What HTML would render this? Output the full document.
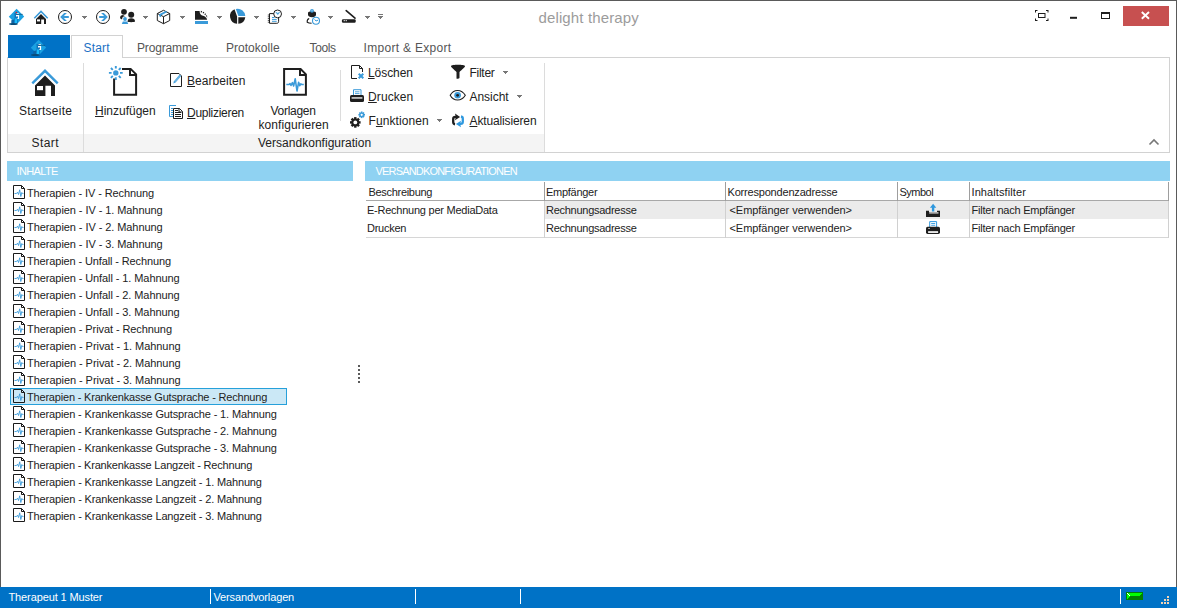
<!DOCTYPE html>
<html><head><meta charset="utf-8">
<style>
*{box-sizing:border-box;margin:0;padding:0}
html,body{width:1177px;height:608px;overflow:hidden;background:#fff}
body{font-family:"Liberation Sans",sans-serif;font-size:11px;color:#222;position:relative}
.abs{position:absolute}
.t{position:absolute;white-space:nowrap;line-height:1}
#win{position:absolute;left:0;top:0;width:1177px;height:587px;border-left:1px solid #5a5a5a;border-top:1px solid #5a5a5a;border-right:1px solid #5a5a5a}
#title{left:538px;top:9px;font-size:15px;color:#9a9a9a;letter-spacing:.15px}
#appbtn{left:8px;top:35px;width:62px;height:23px;background:#0072c6}
#tabline{left:8px;top:57px;width:1161px;height:1px;background:#d2d2d2}
#ribbon{left:7px;top:57px;width:1163px;height:96px;border:1px solid #d2d2d2;background:#fff}
#starttab{left:71px;top:35px;width:52px;height:23px;border:1px solid #d2d2d2;border-bottom:none;background:#fff}
.tab{font-size:12px;color:#555;top:42px}
#capbar{left:8px;top:134px;width:536px;height:18px;background:#f4f4f4}
.rt{font-size:12px;color:#222}
.sep{position:absolute;width:1px;background:#dcdcdc}
.hdr{position:absolute;top:161px;height:20px;background:#8fd2f2}
.hdr span{position:absolute;left:10px;top:4px;color:#fff;font-size:11px;letter-spacing:-.75px;white-space:nowrap}
.ti{position:absolute;left:27px;font-size:11px;letter-spacing:-.19px;white-space:nowrap;line-height:13px;color:#222}
#sel{left:10px;top:388px;width:277px;height:17px;background:#cbe8f6;border:1px solid #26a0da}
#status{left:0;top:587px;width:1177px;height:21px;background:#0072c6}
#status .t{color:#fff;top:5px;font-size:11px}
.ssep{position:absolute;top:2px;width:1px;height:15px;background:#fff}
.vs{top:201px;width:1px;height:37px;background:#d0d0d0}
.vh{top:182px;width:1px;height:19px;background:#9e9e9e}
.di{position:absolute;left:13px}
.gt{position:absolute;font-size:11px;white-space:nowrap;line-height:13px;color:#222}
</style></head><body>
<div id="win"></div>

<!-- quick access toolbar -->
<svg class="abs" style="left:8px;top:8px" width="18" height="18" viewBox="0 0 18 18">
<path d="M8.600 0.800L16.200 8.500L8.600 16.400L0.800 8.700Z" fill="#1ba1e2"/>
<path d="M3.300 12.300L6.900 11.300V15.800H3.300Z" fill="#0c64a6"/>
<path d="M6.400 5L9.600 4.400L10.300 9L9.900 15H5.800L6.600 9Z" fill="#0f76be"/>
<path d="M6.900 10.600H9.300L9.100 15H6.700Z" fill="#19bcfb"/>
<path d="M8.600 5H10.800V5.900H8.600ZM8 7.100H11.100V11H9.400V9.700H10V8.400H8Z" fill="#fff"/>
<path d="M9 8.700H9.800V9.400H9Z" fill="#0f76be"/>
<path d="M8.400 6.200L14.900 6.400" stroke="#0a3f66" stroke-width=".6"/>
<circle cx="8.300" cy="4.500" r=".75" fill="#e81123"/>
<ellipse cx="5.400" cy="16.100" rx="4.400" ry="1" fill="#0a4c7a"/>
</svg>
<svg class="abs" style="left:33px;top:9px" width="16" height="16" viewBox="0 0 16 16">
<path d="M1.3 9.2L8 2.4L14.7 9.2" fill="none" stroke="#3a9ad9" stroke-width="1.5"/>
<path d="M8 5L13 10V15H11V10.4H8.2V15H3V10Z" fill="#1e1e1e"/>
<rect x="4" y="10.4" width="3" height="2" fill="#fff"/>
</svg>
<svg class="abs" style="left:57px;top:9px" width="16" height="16" viewBox="0 0 16 16">
<circle cx="8" cy="8" r="6.5" fill="#fff" stroke="#1e1e1e" stroke-width="1"/>
<path d="M3.2 8L7.2 3.900H9.900L6.900 7H11.800V9H6.900L9.900 12.100H7.200Z" fill="#3a9ad9"/>
</svg>
<svg class="abs" style="left:95px;top:9px" width="16" height="16" viewBox="0 0 16 16">
<circle cx="8" cy="8" r="6.5" fill="#fff" stroke="#1e1e1e" stroke-width="1"/>
<path d="M12.800 8L8.800 3.900H6.100L9.100 7H4.200V9H9.100L6.100 12.100H8.800Z" fill="#3a9ad9"/>
</svg>
<svg class="abs" style="left:119px;top:8px" width="18" height="18" viewBox="0 0 18 18">
<circle cx="5" cy="3.8" r="2.9" fill="#1e1e1e"/>
<path d="M1 10.2C1 8 2.2 7 4 7L6.5 8.6L3 11.6Z" fill="#1e1e1e"/>
<circle cx="12.2" cy="6.8" r="3" fill="#1e1e1e"/>
<path d="M8.4 13.6C8.4 11 10 10.2 12.2 10.2C14.6 10.2 16 11 16 13.6C16 14.4 8.4 14.4 8.4 13.6Z" fill="#1e1e1e"/>
<circle cx="6" cy="11" r="2.8" fill="#fff"/>
<circle cx="6" cy="11" r="1.9" fill="#3a9ad9"/>
<path d="M2.8 16L3.8 13.4H8.2L9.2 16Z" fill="#3a9ad9"/>
</svg>
<svg class="abs" style="left:156px;top:9px" width="16" height="16" viewBox="0 0 16 16">
<path d="M7.5 1.3L13.7 4.5V11.5L7.5 14.7L1.3 11.5V4.5Z" fill="#fff" stroke="#1e1e1e" stroke-width="1" stroke-linejoin="round"/>
<path d="M1.3 4.5L7.5 7.7L13.7 4.5M7.5 7.7V14.7" fill="none" stroke="#1e1e1e" stroke-width="1"/>
<path d="M3.2 5.2L9.6 2L11.4 3L5 6.4V8.2L3.2 7.2Z" fill="#3a9ad9"/>
</svg>
<svg class="abs" style="left:194px;top:9px" width="16" height="16" viewBox="0 0 16 16">
<path d="M1 2H5.600C5.700 5 6.800 6.100 9 6.700C11.200 7.300 12.600 8.600 13.200 10.700H1Z" fill="#1e1e1e"/>
<path d="M6.800 2.500C9.600 3.200 12.200 5.400 13.300 8.800" fill="none" stroke="#1e1e1e" stroke-width="1.300" stroke-dasharray="1.200 1.100"/>
<rect x="1" y="12" width="13" height="3" fill="#3a9ad9"/>
</svg>
<svg class="abs" style="left:229px;top:8px" width="18" height="18" viewBox="0 0 18 18">
<path d="M8.100 8.600L5.500 1.300A7.600 7.600 0 0 0 8.100 15.800Z" fill="#1e1e1e"/>
<path d="M9.3 9.3H16.3A7.6 7.6 0 0 1 9.3 15.8Z" fill="#1e1e1e"/>
<path d="M9.4 8L6.8 0.9A7.6 7.6 0 0 1 16.3 8Z" fill="#3a9ad9"/>
</svg>
<svg class="abs" style="left:266px;top:8px" width="18" height="18" viewBox="0 0 18 18">
<path d="M3.500 5.600H12.600V13.400C12.600 14.800 12 15.300 10.800 15.300H3.500Z" fill="#fff" stroke="#1e1e1e" stroke-width="1"/>
<path d="M1.8 7H4M1.8 8.8H4M1.8 10.6H4M1.8 12.4H4M1.8 14.2H4" stroke="#1e1e1e" stroke-width=".8"/>
<path d="M6 9.500H8.500M6 11.400H10.700M6 13.300H10.700" stroke="#3a9ad9" stroke-width="1"/>
<circle cx="11.6" cy="5.9" r="3.9" fill="#fff" stroke="#1e1e1e" stroke-width="1"/>
<path d="M9.8 4.2L11.8 6.6L13.6 4.4L11.6 5.2Z" fill="#3a9ad9" stroke="#3a9ad9" stroke-width=".6"/>
</svg>
<svg class="abs" style="left:304px;top:7px" width="18" height="18" viewBox="0 0 18 18">
<path d="M4 5.800C4 3.800 12 3.800 12 5.800V7.800C12 9.200 10.400 10.200 8 10.200C5.600 10.200 4 9.200 4 7.800Z" fill="#1e1e1e"/>
<circle cx="8" cy="3.800" r="1.900" fill="#3a9ad9"/>
<circle cx="8" cy="3.800" r=".7" fill="#9fd0f0"/>
<path d="M5.2 11.4C3.4 12 3 13.4 3.2 15.2C4.4 16 6 16.2 7.6 16.2" fill="none" stroke="#1e1e1e" stroke-width="1.1"/>
<circle cx="12" cy="13.8" r="3.5" fill="#fff" stroke="#3a9ad9" stroke-width="1.1"/>
<path d="M10.6 12.4L12 14L14 13.2" fill="none" stroke="#3a9ad9" stroke-width="1"/>
</svg>
<svg class="abs" style="left:340px;top:8px" width="18" height="18" viewBox="0 0 18 18">
<path d="M6.2 2.6L15 10.2" stroke="#1e1e1e" stroke-width="1.6" stroke-linecap="round"/>
<rect x="1.9" y="11.3" width="13.8" height="3.5" rx="1.2" fill="#1e1e1e"/>
<rect x="3.7" y="12.1" width="1.1" height="1.1" fill="#fff"/><rect x="5.7" y="12.1" width="1.1" height="1.1" fill="#fff"/>
</svg>
<!-- dropdown arrows -->
<svg class="abs" style="left:0;top:0" width="400" height="34" viewBox="0 0 400 34" shape-rendering="crispEdges">
<g fill="#777"><path d="M82 16h5v1h-1v1h-1v1h-1v-1h-1v-1h-1z"/><path d="M143 16h5v1h-1v1h-1v1h-1v-1h-1v-1h-1z"/><path d="M180 16h5v1h-1v1h-1v1h-1v-1h-1v-1h-1z"/><path d="M217 16h5v1h-1v1h-1v1h-1v-1h-1v-1h-1z"/><path d="M254 16h5v1h-1v1h-1v1h-1v-1h-1v-1h-1z"/><path d="M291 16h5v1h-1v1h-1v1h-1v-1h-1v-1h-1z"/><path d="M328 16h5v1h-1v1h-1v1h-1v-1h-1v-1h-1z"/><path d="M365 16h5v1h-1v1h-1v1h-1v-1h-1v-1h-1z"/><path d="M378 16h5v1h-1v1h-1v1h-1v-1h-1v-1h-1z"/><rect x="378" y="14" width="5" height="1"/></g></svg>
<!-- window controls -->
<svg class="abs" style="left:1030px;top:4px" width="142" height="26" viewBox="0 0 142 26">
<rect x="93" y="2" width="46" height="20" fill="#c75050"/>
<path d="M111.800 8L119 14.800M119 8L111.800 14.800" stroke="#fff" stroke-width="1.900"/>
<rect x="71.500" y="9" width="8" height="5.500" fill="#fff" stroke="#1e1e1e" stroke-width="1"/><rect x="71" y="8" width="9" height="2" fill="#1e1e1e"/>
<rect x="40" y="12.800" width="7" height="2" fill="#1e1e1e"/>
<rect x="8.500" y="9.500" width="6.500" height="4" fill="#fff" stroke="#1e1e1e" stroke-width="1"/>
<path d="M5 6H7.500V7H6V8.500H5ZM18.500 6H16V7H17.500V8.500H18.500ZM5 17H7.500V16H6V14.500H5ZM18.500 17H16V16H17.500V14.500H18.500Z" fill="#1e1e1e"/>
</svg>

<div class="abs" id="ribbon"></div>
<div class="abs" id="appbtn"></div>
<div class="abs" id="starttab"></div>

<div class="abs" id="capbar"></div>
<div class="sep" style="left:83px;top:63px;height:89px"></div>
<div class="sep" style="left:544px;top:63px;height:89px"></div>
<div class="sep" style="left:340px;top:70px;height:51px"></div>

<!-- app button logo -->
<svg class="abs" style="left:30px;top:39px" width="18" height="18" viewBox="0 0 18 18">
<path d="M8.600 0.800L16.200 8.500L8.600 16.400L0.800 8.700Z" fill="#1ba1e2"/>
<path d="M3.300 12.300L6.900 11.300V15.800H3.300Z" fill="#0c64a6"/>
<path d="M6.400 5L9.600 4.400L10.300 9L9.900 15H5.800L6.600 9Z" fill="#0f76be"/>
<path d="M6.900 10.600H9.300L9.100 15H6.700Z" fill="#19bcfb"/>
<path d="M8.600 5H10.800V5.900H8.600ZM8 7.100H11.100V11H9.400V9.700H10V8.400H8Z" fill="#fff"/>
<path d="M9 8.700H9.800V9.400H9Z" fill="#0f76be"/>
<path d="M8.400 6.200L14.900 6.400" stroke="#0a3f66" stroke-width=".6"/>
<ellipse cx="5.400" cy="16.100" rx="4.400" ry="1" fill="#0a4c7a"/>
</svg>
<!-- Startseite big home -->
<svg class="abs" style="left:29px;top:66px" width="32" height="32" viewBox="0 0 32 32">
<path d="M3.300 17.300L16 4.800L28.700 17.300" fill="none" stroke="#3a9ad9" stroke-width="2.400"/>
<path d="M16 9.600L26 19.400V30H22V19.800H16.400V30H6V19.400Z" fill="#1e1e1e"/>
<rect x="8" y="20" width="6" height="4.200" fill="#fff"/>
</svg>
<!-- Hinzufügen -->
<svg class="abs" style="left:108px;top:64px" width="32" height="32" viewBox="0 0 32 32">
<path d="M14 4.900H22.600L28.100 10.400V30.800H6.100V14.600" fill="none" stroke="#1e1e1e" stroke-width="2"/>
<path d="M22 4.900V11H28.100" fill="none" stroke="#1e1e1e" stroke-width="2"/>
<circle cx="7.800" cy="8.900" r="2.700" fill="#3a9ad9"/>
<path d="M7.800 1.900V4.600M7.800 13.200V15.900M0.900 8.900H3.600M12 8.900H14.700M2.900 4L4.800 5.900M10.800 11.900L12.700 13.800M12.700 4L10.800 5.900M4.800 11.900L2.900 13.800" stroke="#3a9ad9" stroke-width="1.900"/>
</svg>
<!-- Bearbeiten -->
<svg class="abs" style="left:169px;top:72px" width="16" height="16" viewBox="0 0 16 16">
<path d="M1.500 1.500H10L12.500 4V14.500H1.500Z" fill="#fff" stroke="#1e1e1e" stroke-width="1"/>
<path d="M4.300 11.600L5 9.200L10.600 2.600L12.200 4L6.600 10.600Z" fill="#3a9ad9"/>
<path d="M5.600 9.600L11 3.200M6.200 10.200L11.600 3.800" stroke="#bfe0f5" stroke-width=".4"/>
</svg>
<!-- Duplizieren -->
<svg class="abs" style="left:168px;top:104px" width="16" height="16" viewBox="0 0 16 16">
<path d="M8 1.500H1.500V12.500H5" fill="none" stroke="#3a9ad9" stroke-width="1"/>
<path d="M3 4.500H5M3 6.500H5M3 8.500H5M3 10.500H5" stroke="#3a9ad9" stroke-width="1"/>
<path d="M5.500 4.500H11.500L14.500 7.500V14.500H5.500Z" fill="#fff" stroke="#1e1e1e" stroke-width="1"/>
<path d="M11 4.500V8H14.500" fill="none" stroke="#1e1e1e" stroke-width="1"/>
<path d="M7 6.500H10M7 8.500H13M7 10.500H13M7 12.500H13" stroke="#1e1e1e" stroke-width="1"/>
</svg>
<!-- Vorlagen konfigurieren -->
<svg class="abs" style="left:279px;top:64px" width="32" height="32" viewBox="0 0 32 32">
<path d="M5.100 5H21.600L26.900 10.300V30.800H5.100Z" fill="#fff" stroke="#1e1e1e" stroke-width="2"/>
<path d="M21 5V11H26.900" fill="none" stroke="#1e1e1e" stroke-width="2"/>
<path d="M7.300 20.500H10L11 19.500L12 21.500L13.400 18.600L14.600 22L16.200 14.800L18 27L19.600 18.400L20.800 21.600L21.800 19.800L22.600 20.500H24.800" fill="none" stroke="#3a9ad9" stroke-width="1.600" stroke-linejoin="round"/>
</svg>
<!-- Löschen -->
<svg class="abs" style="left:350px;top:64px" width="16" height="16" viewBox="0 0 16 16">
<path d="M7 14.500H1.500V1.500H9.500L12.500 4.500V8" fill="none" stroke="#1e1e1e" stroke-width="1"/>
<path d="M9.500 1.500V4.500H12.500" fill="none" stroke="#1e1e1e" stroke-width="1"/>
<path d="M8.700 9.700L13.300 14.300M13.300 9.700L8.700 14.300" stroke="#3a9ad9" stroke-width="2"/>
</svg>
<!-- Drucken -->
<svg class="abs" style="left:349px;top:88px" width="16" height="16" viewBox="0 0 16 16">
<path d="M4.500 7V1.700H12V7" fill="#fff" stroke="#3a9ad9" stroke-width="1"/>
<path d="M6 3.800H10.500M6 5.600H10.500" stroke="#3a9ad9" stroke-width=".9"/>
<rect x="1" y="7" width="14" height="7" rx="1.500" fill="#1e1e1e"/>
<rect x="2.600" y="9.300" width="10.800" height="1.300" fill="#fff"/>
</svg>
<!-- Funktionen -->
<svg class="abs" style="left:349px;top:110px" width="18" height="18" viewBox="0 0 18 18">
<g transform="translate(6.300,12.400)"><g fill="#1e1e1e"><rect x="-1.200" y="-5.300" width="2.400" height="10.600"/><rect x="-1.200" y="-5.300" width="2.400" height="10.600" transform="rotate(45)"/><rect x="-1.200" y="-5.300" width="2.400" height="10.600" transform="rotate(90)"/><rect x="-1.200" y="-5.300" width="2.400" height="10.600" transform="rotate(135)"/><circle r="3.900"/></g><circle r="1.900" fill="#fff"/></g>
<g transform="translate(12.700,4.800)"><g fill="#3a9ad9"><rect x="-.8" y="-3.300" width="1.600" height="6.600"/><rect x="-.8" y="-3.300" width="1.600" height="6.600" transform="rotate(45)"/><rect x="-.8" y="-3.300" width="1.600" height="6.600" transform="rotate(90)"/><rect x="-.8" y="-3.300" width="1.600" height="6.600" transform="rotate(135)"/><circle r="2.400"/></g><circle r="1.100" fill="#fff"/></g>
</svg>
<!-- Filter -->
<svg class="abs" style="left:450px;top:64px" width="16" height="16" viewBox="0 0 16 16">
<path d="M1 2.200C1 0.300 15 0.300 15 2.200C15 3.200 12 5.400 9.500 8V13.800C9.500 14.600 6.500 15.200 6.500 14.400V8C4 5.400 1 3.200 1 2.200Z" fill="#1e1e1e"/>
</svg>
<!-- Ansicht -->
<svg class="abs" style="left:449px;top:87px" width="18" height="16" viewBox="0 0 18 16">
<path d="M1.200 8.300C4.500 1.800 12.500 1.800 16.300 8.300C12.500 14.600 4.500 14.600 1.200 8.300Z" fill="#fff" stroke="#1e1e1e" stroke-width="1.100"/>
<circle cx="8.600" cy="8.300" r="3.300" fill="#3a9ad9"/><circle cx="8.600" cy="8.300" r="1.400" fill="#1e1e1e"/>
</svg>
<!-- Aktualisieren -->
<svg class="abs" style="left:450px;top:112px" width="16" height="16" viewBox="0 0 16 16">
<path d="M5 12.300C3.400 12 3.200 11 3.200 10V7C3.200 5.300 4 4.900 5.400 4.900H6.500" fill="none" stroke="#1e1e1e" stroke-width="2.300"/>
<path d="M5 1.600L10.100 4.900L5 8.200L5.800 4.900Z" fill="#1e1e1e"/>
<path d="M11 4.500C12.600 4.800 12.800 5.800 12.800 6.800V9.800C12.800 11.500 12 11.900 10.600 11.900H9.500" fill="none" stroke="#2f98de" stroke-width="2.300"/>
<path d="M11 8.700L5.900 12L11 15.300L10.200 12Z" fill="#2f98de"/>
</svg>
<!-- ribbon dropdown arrows + collapse chevron -->
<svg class="abs" style="left:430px;top:60px" width="100" height="70" viewBox="430 60 100 70" shape-rendering="crispEdges">
<g fill="#777"><path d="M437 119h5v1h-1v1h-1v1h-1v-1h-1v-1h-1z"/><path d="M503 71h5v1h-1v1h-1v1h-1v-1h-1v-1h-1z"/><path d="M517 95h5v1h-1v1h-1v1h-1v-1h-1v-1h-1z"/></g>
</svg>
<svg class="abs" style="left:1148px;top:137px" width="12" height="10" viewBox="0 0 12 10"><path d="M1.500 7.500L6 3L10.500 7.500" fill="none" stroke="#777" stroke-width="1.600"/></svg>

<div class="hdr" style="left:7px;width:346px"></div>
<div class="hdr" style="left:365px;width:805px"></div>

<div class="abs" style="left:358px;top:365px;width:2px;height:2px;background:#5a5a5a"></div><div class="abs" style="left:358px;top:369px;width:2px;height:2px;background:#5a5a5a"></div><div class="abs" style="left:358px;top:373px;width:2px;height:2px;background:#5a5a5a"></div><div class="abs" style="left:358px;top:377px;width:2px;height:2px;background:#5a5a5a"></div><div class="abs" style="left:358px;top:381px;width:2px;height:2px;background:#5a5a5a"></div>
<div class="abs" id="sel"></div>
<div id="tree">
<svg class="di" style="top:185px" width="12" height="14" viewBox="0 0 12 14"><path d="M0.5 0.5H8.5L11.5 3.5V13.5H0.5Z" fill="none" stroke="#1a1a1a"/><path d="M8.5 0.5V3.5H11.5" fill="none" stroke="#1a1a1a"/><path d="M1.5 8.500H3.500L4.500 7.200L5.500 9.500L6.700 4.800L7.800 11.500L8.800 7.500L9.500 8.500H10.500" fill="none" stroke="#3a9ad9" stroke-width=".9"/></svg><div class="ti" style="top:187px;letter-spacing:-0.107px">Therapien - IV - Rechnung</div>
<svg class="di" style="top:202px" width="12" height="14" viewBox="0 0 12 14"><path d="M0.5 0.5H8.5L11.5 3.5V13.5H0.5Z" fill="none" stroke="#1a1a1a"/><path d="M8.5 0.5V3.5H11.5" fill="none" stroke="#1a1a1a"/><path d="M1.5 8.500H3.500L4.500 7.200L5.500 9.500L6.700 4.800L7.800 11.500L8.800 7.500L9.500 8.500H10.500" fill="none" stroke="#3a9ad9" stroke-width=".9"/></svg><div class="ti" style="top:204px;letter-spacing:-0.075px">Therapien - IV - 1. Mahnung</div>
<svg class="di" style="top:219px" width="12" height="14" viewBox="0 0 12 14"><path d="M0.5 0.5H8.5L11.5 3.5V13.5H0.5Z" fill="none" stroke="#1a1a1a"/><path d="M8.5 0.5V3.5H11.5" fill="none" stroke="#1a1a1a"/><path d="M1.5 8.500H3.500L4.500 7.200L5.500 9.500L6.700 4.800L7.800 11.500L8.800 7.500L9.500 8.500H10.500" fill="none" stroke="#3a9ad9" stroke-width=".9"/></svg><div class="ti" style="top:221px;letter-spacing:-0.075px">Therapien - IV - 2. Mahnung</div>
<svg class="di" style="top:236px" width="12" height="14" viewBox="0 0 12 14"><path d="M0.5 0.5H8.5L11.5 3.5V13.5H0.5Z" fill="none" stroke="#1a1a1a"/><path d="M8.5 0.5V3.5H11.5" fill="none" stroke="#1a1a1a"/><path d="M1.5 8.500H3.500L4.500 7.200L5.500 9.500L6.700 4.800L7.800 11.500L8.800 7.500L9.500 8.500H10.500" fill="none" stroke="#3a9ad9" stroke-width=".9"/></svg><div class="ti" style="top:238px;letter-spacing:-0.075px">Therapien - IV - 3. Mahnung</div>
<svg class="di" style="top:253px" width="12" height="14" viewBox="0 0 12 14"><path d="M0.5 0.5H8.5L11.5 3.5V13.5H0.5Z" fill="none" stroke="#1a1a1a"/><path d="M8.5 0.5V3.5H11.5" fill="none" stroke="#1a1a1a"/><path d="M1.5 8.500H3.500L4.500 7.200L5.500 9.500L6.700 4.800L7.800 11.500L8.800 7.500L9.500 8.500H10.500" fill="none" stroke="#3a9ad9" stroke-width=".9"/></svg><div class="ti" style="top:255px;letter-spacing:-0.119px">Therapien - Unfall - Rechnung</div>
<svg class="di" style="top:270px" width="12" height="14" viewBox="0 0 12 14"><path d="M0.5 0.5H8.5L11.5 3.5V13.5H0.5Z" fill="none" stroke="#1a1a1a"/><path d="M8.5 0.5V3.5H11.5" fill="none" stroke="#1a1a1a"/><path d="M1.5 8.500H3.500L4.500 7.200L5.500 9.500L6.700 4.800L7.800 11.500L8.800 7.500L9.500 8.500H10.500" fill="none" stroke="#3a9ad9" stroke-width=".9"/></svg><div class="ti" style="top:272px;letter-spacing:-0.090px">Therapien - Unfall - 1. Mahnung</div>
<svg class="di" style="top:287px" width="12" height="14" viewBox="0 0 12 14"><path d="M0.5 0.5H8.5L11.5 3.5V13.5H0.5Z" fill="none" stroke="#1a1a1a"/><path d="M8.5 0.5V3.5H11.5" fill="none" stroke="#1a1a1a"/><path d="M1.5 8.500H3.500L4.500 7.200L5.500 9.500L6.700 4.800L7.800 11.500L8.800 7.500L9.500 8.500H10.500" fill="none" stroke="#3a9ad9" stroke-width=".9"/></svg><div class="ti" style="top:289px;letter-spacing:-0.090px">Therapien - Unfall - 2. Mahnung</div>
<svg class="di" style="top:304px" width="12" height="14" viewBox="0 0 12 14"><path d="M0.5 0.5H8.5L11.5 3.5V13.5H0.5Z" fill="none" stroke="#1a1a1a"/><path d="M8.5 0.5V3.5H11.5" fill="none" stroke="#1a1a1a"/><path d="M1.5 8.500H3.500L4.500 7.200L5.500 9.500L6.700 4.800L7.800 11.500L8.800 7.500L9.500 8.500H10.500" fill="none" stroke="#3a9ad9" stroke-width=".9"/></svg><div class="ti" style="top:306px;letter-spacing:-0.090px">Therapien - Unfall - 3. Mahnung</div>
<svg class="di" style="top:321px" width="12" height="14" viewBox="0 0 12 14"><path d="M0.5 0.5H8.5L11.5 3.5V13.5H0.5Z" fill="none" stroke="#1a1a1a"/><path d="M8.5 0.5V3.5H11.5" fill="none" stroke="#1a1a1a"/><path d="M1.5 8.500H3.500L4.500 7.200L5.500 9.500L6.700 4.800L7.800 11.500L8.800 7.500L9.500 8.500H10.500" fill="none" stroke="#3a9ad9" stroke-width=".9"/></svg><div class="ti" style="top:323px;letter-spacing:-0.083px">Therapien - Privat - Rechnung</div>
<svg class="di" style="top:338px" width="12" height="14" viewBox="0 0 12 14"><path d="M0.5 0.5H8.5L11.5 3.5V13.5H0.5Z" fill="none" stroke="#1a1a1a"/><path d="M8.5 0.5V3.5H11.5" fill="none" stroke="#1a1a1a"/><path d="M1.5 8.500H3.500L4.500 7.200L5.500 9.500L6.700 4.800L7.800 11.500L8.800 7.500L9.500 8.500H10.500" fill="none" stroke="#3a9ad9" stroke-width=".9"/></svg><div class="ti" style="top:340px;letter-spacing:-0.057px">Therapien - Privat - 1. Mahnung</div>
<svg class="di" style="top:355px" width="12" height="14" viewBox="0 0 12 14"><path d="M0.5 0.5H8.5L11.5 3.5V13.5H0.5Z" fill="none" stroke="#1a1a1a"/><path d="M8.5 0.5V3.5H11.5" fill="none" stroke="#1a1a1a"/><path d="M1.5 8.500H3.500L4.500 7.200L5.500 9.500L6.700 4.800L7.800 11.500L8.800 7.500L9.500 8.500H10.500" fill="none" stroke="#3a9ad9" stroke-width=".9"/></svg><div class="ti" style="top:357px;letter-spacing:-0.057px">Therapien - Privat - 2. Mahnung</div>
<svg class="di" style="top:372px" width="12" height="14" viewBox="0 0 12 14"><path d="M0.5 0.5H8.5L11.5 3.5V13.5H0.5Z" fill="none" stroke="#1a1a1a"/><path d="M8.5 0.5V3.5H11.5" fill="none" stroke="#1a1a1a"/><path d="M1.5 8.500H3.500L4.500 7.200L5.500 9.500L6.700 4.800L7.800 11.500L8.800 7.500L9.500 8.500H10.500" fill="none" stroke="#3a9ad9" stroke-width=".9"/></svg><div class="ti" style="top:374px;letter-spacing:-0.057px">Therapien - Privat - 3. Mahnung</div>
<svg class="di" style="top:389px" width="12" height="14" viewBox="0 0 12 14"><path d="M0.5 0.5H8.5L11.5 3.5V13.5H0.5Z" fill="none" stroke="#1a1a1a"/><path d="M8.5 0.5V3.5H11.5" fill="none" stroke="#1a1a1a"/><path d="M1.5 8.500H3.500L4.500 7.200L5.500 9.500L6.700 4.800L7.800 11.500L8.800 7.500L9.500 8.500H10.500" fill="none" stroke="#3a9ad9" stroke-width=".9"/></svg><div class="ti" style="top:391px;letter-spacing:-0.190px">Therapien - Krankenkasse Gutsprache - Rechnung</div>
<svg class="di" style="top:406px" width="12" height="14" viewBox="0 0 12 14"><path d="M0.5 0.5H8.5L11.5 3.5V13.5H0.5Z" fill="none" stroke="#1a1a1a"/><path d="M8.5 0.5V3.5H11.5" fill="none" stroke="#1a1a1a"/><path d="M1.5 8.500H3.500L4.500 7.200L5.500 9.500L6.700 4.800L7.800 11.500L8.800 7.500L9.500 8.500H10.500" fill="none" stroke="#3a9ad9" stroke-width=".9"/></svg><div class="ti" style="top:408px;letter-spacing:-0.147px">Therapien - Krankenkasse Gutsprache - 1. Mahnung</div>
<svg class="di" style="top:423px" width="12" height="14" viewBox="0 0 12 14"><path d="M0.5 0.5H8.5L11.5 3.5V13.5H0.5Z" fill="none" stroke="#1a1a1a"/><path d="M8.5 0.5V3.5H11.5" fill="none" stroke="#1a1a1a"/><path d="M1.5 8.500H3.500L4.500 7.200L5.500 9.500L6.700 4.800L7.800 11.500L8.800 7.500L9.500 8.500H10.500" fill="none" stroke="#3a9ad9" stroke-width=".9"/></svg><div class="ti" style="top:425px;letter-spacing:-0.147px">Therapien - Krankenkasse Gutsprache - 2. Mahnung</div>
<svg class="di" style="top:440px" width="12" height="14" viewBox="0 0 12 14"><path d="M0.5 0.5H8.5L11.5 3.5V13.5H0.5Z" fill="none" stroke="#1a1a1a"/><path d="M8.5 0.5V3.5H11.5" fill="none" stroke="#1a1a1a"/><path d="M1.5 8.500H3.500L4.500 7.200L5.500 9.500L6.700 4.800L7.800 11.500L8.800 7.500L9.500 8.500H10.500" fill="none" stroke="#3a9ad9" stroke-width=".9"/></svg><div class="ti" style="top:442px;letter-spacing:-0.147px">Therapien - Krankenkasse Gutsprache - 3. Mahnung</div>
<svg class="di" style="top:457px" width="12" height="14" viewBox="0 0 12 14"><path d="M0.5 0.5H8.5L11.5 3.5V13.5H0.5Z" fill="none" stroke="#1a1a1a"/><path d="M8.5 0.5V3.5H11.5" fill="none" stroke="#1a1a1a"/><path d="M1.5 8.500H3.500L4.500 7.200L5.500 9.500L6.700 4.800L7.800 11.500L8.800 7.500L9.500 8.500H10.500" fill="none" stroke="#3a9ad9" stroke-width=".9"/></svg><div class="ti" style="top:459px;letter-spacing:-0.190px">Therapien - Krankenkasse Langzeit - Rechnung</div>
<svg class="di" style="top:474px" width="12" height="14" viewBox="0 0 12 14"><path d="M0.5 0.5H8.5L11.5 3.5V13.5H0.5Z" fill="none" stroke="#1a1a1a"/><path d="M8.5 0.5V3.5H11.5" fill="none" stroke="#1a1a1a"/><path d="M1.5 8.500H3.500L4.500 7.200L5.500 9.500L6.700 4.800L7.800 11.500L8.800 7.500L9.500 8.500H10.500" fill="none" stroke="#3a9ad9" stroke-width=".9"/></svg><div class="ti" style="top:476px;letter-spacing:-0.146px">Therapien - Krankenkasse Langzeit - 1. Mahnung</div>
<svg class="di" style="top:491px" width="12" height="14" viewBox="0 0 12 14"><path d="M0.5 0.5H8.5L11.5 3.5V13.5H0.5Z" fill="none" stroke="#1a1a1a"/><path d="M8.5 0.5V3.5H11.5" fill="none" stroke="#1a1a1a"/><path d="M1.5 8.500H3.500L4.500 7.200L5.500 9.500L6.700 4.800L7.800 11.500L8.800 7.500L9.500 8.500H10.500" fill="none" stroke="#3a9ad9" stroke-width=".9"/></svg><div class="ti" style="top:493px;letter-spacing:-0.146px">Therapien - Krankenkasse Langzeit - 2. Mahnung</div>
<svg class="di" style="top:508px" width="12" height="14" viewBox="0 0 12 14"><path d="M0.5 0.5H8.5L11.5 3.5V13.5H0.5Z" fill="none" stroke="#1a1a1a"/><path d="M8.5 0.5V3.5H11.5" fill="none" stroke="#1a1a1a"/><path d="M1.5 8.500H3.500L4.500 7.200L5.500 9.500L6.700 4.800L7.800 11.500L8.800 7.500L9.500 8.500H10.500" fill="none" stroke="#3a9ad9" stroke-width=".9"/></svg><div class="ti" style="top:510px;letter-spacing:-0.146px">Therapien - Krankenkasse Langzeit - 3. Mahnung</div>
</div>

<div id="grid">
<div class="abs" style="left:544px;top:201px;width:624px;height:18px;background:#ebebeb"></div>
<div class="abs" style="left:366px;top:200px;width:803px;height:1px;background:#a8a8a8"></div>
<div class="abs" style="left:366px;top:237px;width:803px;height:1px;background:#d6d6d6"></div>
<div class="abs vs" style="left:544px"></div><div class="abs vs" style="left:725px"></div><div class="abs vs" style="left:897px"></div><div class="abs vs" style="left:969px"></div><div class="abs vs" style="left:1168px"></div>
<div class="abs vh" style="left:544px"></div><div class="abs vh" style="left:725px"></div><div class="abs vh" style="left:897px"></div><div class="abs vh" style="left:969px"></div><div class="abs vh" style="left:1168px"></div>
<svg class="abs" style="left:925px;top:203px" width="16" height="16" viewBox="0 0 16 16">
<path d="M1 7.800H4V9H12V7.800H15V14H1Z" fill="#1e1e1e"/><rect x="4.200" y="9.300" width="9.300" height="1.200" fill="#ebebeb"/>
<path d="M8.100 0.800L11.300 4.800H9.300V8.600H6.900V4.800H4.900Z" fill="#2f98de"/>
</svg>
<svg class="abs" style="left:925px;top:220px" width="16" height="16" viewBox="0 0 16 16">
<path d="M4.700 7V1.600H11.600V7" fill="#fff" stroke="#2f98de" stroke-width="1"/>
<path d="M6.200 3.500H10.200M6.200 5.300H10.200" stroke="#2f98de" stroke-width=".9"/>
<rect x="1" y="6.700" width="14" height="7.200" rx="1.600" fill="#1e1e1e"/>
<rect x="3.100" y="11.200" width="10" height="1.700" fill="#fff"/><rect x="3.300" y="8" width="1.500" height=".8" fill="#fff"/>
</svg>
</div>

<div class="abs" id="status">
<div class="ssep" style="left:210px"></div>
<div class="ssep" style="left:415px"></div>
<div class="ssep" style="left:520px"></div>
<div class="ssep" style="left:1120px"></div>
<svg class="abs" style="left:1126px;top:5px" width="17" height="8" viewBox="0 0 17 8" shape-rendering="crispEdges">
<rect width="17" height="8" fill="#008000"/>
<path d="M1 1H16L13 4H4L1 7Z" fill="#00ff00"/>
<path d="M1 1H2V2H3V3H4V4H3V3H2V2H1Z" fill="#fff"/>
</svg>
<svg class="abs" style="left:1161px;top:9px" width="8" height="8" viewBox="0 0 8 8" shape-rendering="crispEdges">
<g fill="#f1d3b5"><rect x="6" y="0" width="2" height="2"/><rect x="3" y="3" width="2" height="2"/><rect x="6" y="3" width="2" height="2"/><rect x="0" y="6" width="2" height="2"/><rect x="3" y="6" width="2" height="2"/><rect x="6" y="6" width="2" height="2"/></g>
</svg>
</div>
<div class="t" style="left:538.5px;top:10px;font-size:15px;color:#9c9c9c;letter-spacing:0.129px">delight therapy</div>
<div class="t" style="left:83.5px;top:42px;font-size:12px;color:#1a70c4;letter-spacing:0.2px">Start</div>
<div class="t" style="left:137px;top:42px;font-size:12px;color:#555;letter-spacing:-0.15px">Programme</div>
<div class="t" style="left:226px;top:42px;font-size:12px;color:#555;letter-spacing:0.022px">Protokolle</div>
<div class="t" style="left:309.5px;top:42px;font-size:12px;color:#555;letter-spacing:-0.35px">Tools</div>
<div class="t" style="left:363.5px;top:42px;font-size:12px;color:#555;letter-spacing:0.3px">Import &amp; Export</div>
<div class="t" style="left:31.5px;top:137px;font-size:12px;color:#222;letter-spacing:0.45px">Start</div>
<div class="t" style="left:258px;top:137px;font-size:12px;color:#222;letter-spacing:0.021px">Versandkonfiguration</div>
<div class="t" style="left:19px;top:105px;font-size:12px;color:#222;letter-spacing:0.244px">Startseite</div>
<div class="t" style="left:95px;top:105px;font-size:12px;color:#222;letter-spacing:0px"><u>H</u>inzufügen</div>
<div class="t" style="left:187px;top:75px;font-size:12px;color:#222;letter-spacing:0.044px"><u>B</u>earbeiten</div>
<div class="t" style="left:187px;top:107px;font-size:12px;color:#222;letter-spacing:-0.28px"><u>D</u>uplizieren</div>
<div class="t" style="left:270.5px;top:105px;font-size:12px;color:#222;letter-spacing:-0.286px">Vorlagen</div>
<div class="t" style="left:258.5px;top:119px;font-size:12px;color:#222;letter-spacing:0.067px">konfigurieren</div>
<div class="t" style="left:368px;top:67px;font-size:12px;color:#222;letter-spacing:-0.067px"><u>L</u>öschen</div>
<div class="t" style="left:368px;top:91px;font-size:12px;color:#222;letter-spacing:0.1px"><u>D</u>rucken</div>
<div class="t" style="left:368.5px;top:115px;font-size:12px;color:#222;letter-spacing:0.089px">F<u>u</u>nktionen</div>
<div class="t" style="left:469.5px;top:67px;font-size:12px;color:#222;letter-spacing:-0.28px">Filter</div>
<div class="t" style="left:469.5px;top:91px;font-size:12px;color:#222;letter-spacing:-0.033px">Ansicht</div>
<div class="t" style="left:469.5px;top:115px;font-size:12px;color:#222;letter-spacing:-0.137px"><u>A</u>ktualisieren</div>
<div class="t" style="left:368.5px;top:187px;font-size:11px;color:#222;letter-spacing:-0.309px">Beschreibung</div>
<div class="t" style="left:546px;top:187px;font-size:11px;color:#222;letter-spacing:-0.275px">Empfänger</div>
<div class="t" style="left:727.5px;top:187px;font-size:11px;color:#222;letter-spacing:-0.189px">Korrespondenzadresse</div>
<div class="t" style="left:899.5px;top:187px;font-size:11px;color:#222;letter-spacing:-0.52px">Symbol</div>
<div class="t" style="left:971.5px;top:187px;font-size:11px;color:#222;letter-spacing:0.1px">Inhaltsfilter</div>
<div class="t" style="left:367px;top:205px;font-size:11px;color:#222;letter-spacing:-0.243px">E-Rechnung per MediaData</div>
<div class="t" style="left:546px;top:205px;font-size:11px;color:#222;letter-spacing:-0.267px">Rechnungsadresse</div>
<div class="t" style="left:729.5px;top:205px;font-size:11px;color:#222;letter-spacing:-0.05px">&lt;Empfänger verwenden&gt;</div>
<div class="t" style="left:971.5px;top:205px;font-size:11px;color:#222;letter-spacing:-0.23px">Filter nach Empfänger</div>
<div class="t" style="left:367px;top:223px;font-size:11px;color:#222;letter-spacing:-0.267px">Drucken</div>
<div class="t" style="left:546px;top:223px;font-size:11px;color:#222;letter-spacing:-0.267px">Rechnungsadresse</div>
<div class="t" style="left:729.5px;top:223px;font-size:11px;color:#222;letter-spacing:-0.05px">&lt;Empfänger verwenden&gt;</div>
<div class="t" style="left:971.5px;top:223px;font-size:11px;color:#222;letter-spacing:-0.23px">Filter nach Empfänger</div>
<div class="t" style="left:16.5px;top:166px;font-size:11px;color:#fff;letter-spacing:-0.633px">INHALTE</div>
<div class="t" style="left:375.5px;top:166px;font-size:11px;color:#fff;letter-spacing:-0.819px">VERSANDKONFIGURATIONEN</div>
<div class="t" style="left:8.5px;top:592px;font-size:11px;color:#fff;letter-spacing:-0.118px">Therapeut 1 Muster</div>
<div class="t" style="left:213.5px;top:592px;font-size:11px;color:#fff;letter-spacing:-0.13px">Versandvorlagen</div>
</body></html>
